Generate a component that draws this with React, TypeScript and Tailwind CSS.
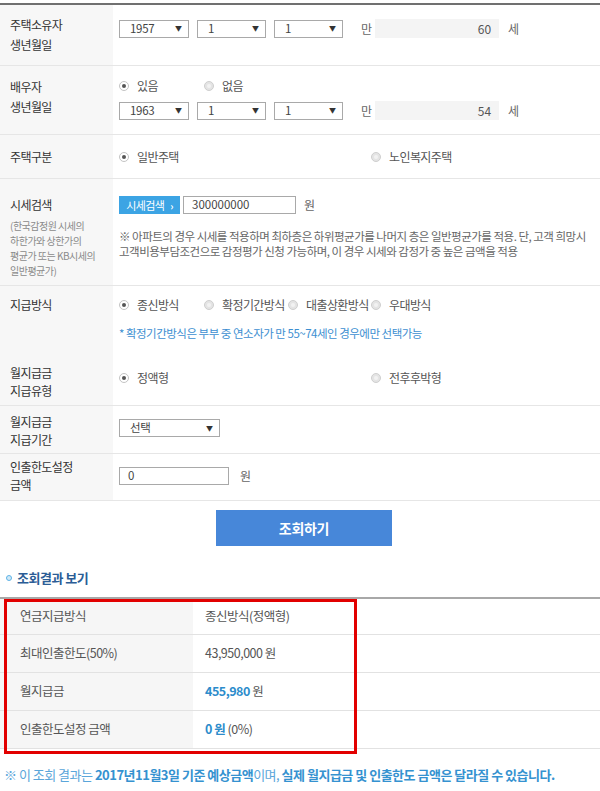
import React from "react";

const Radio = ({ label, checked, className = "" }: { label: string; checked?: boolean; className?: string }) => (
  <div className={`flex items-center gap-[8px] h-[14px] ${className}`}>
    {checked ? (
      <span className="flex items-center justify-center w-[10px] h-[10px] rounded-full border border-[#c4c4c4] bg-white">
        <span className="w-[4px] h-[4px] rounded-full bg-[#555]" />
      </span>
    ) : (
      <span className="flex items-center justify-center w-[10px] h-[10px] rounded-full border border-[#cfcfcf] bg-[#e4e4e4]">
        <span className="w-[4px] h-[4px] rounded-full bg-[#f2f2f2]" />
      </span>
    )}
    <span className="text-[12px] text-[#555] tracking-[-0.6px] leading-[14px] whitespace-nowrap">{label}</span>
  </div>
);

const Select = ({ value, className = "w-[70px]" }: { value: string; className?: string }) => (
  <div className={`flex items-center justify-between h-[18px] border border-[#a9a9a9] bg-white pl-[10px] pr-[6px] ${className}`}>
    <span className="text-[11.5px] text-[#444] leading-none tracking-[-0.3px]">{value}</span>
    <span className="text-[7px] text-[#333] leading-none">▼</span>
  </div>
);

const Row = ({
  label,
  labelClass = "",
  contentClass = "",
  rowClass = "",
  border = true,
  children,
}: {
  label: React.ReactNode;
  labelClass?: string;
  contentClass?: string;
  rowClass?: string;
  border?: boolean;
  children: React.ReactNode;
}) => (
  <div className={`flex ${border ? "border-b border-[#e6e6e6]" : ""} ${rowClass}`}>
    <div className={`w-[113px] shrink-0 bg-[#f7f7f7] pl-[10px] text-[12px] text-[#333] tracking-[-0.6px] ${labelClass}`}>{label}</div>
    <div className={`flex-1 pl-[6px] ${contentClass}`}>{children}</div>
  </div>
);

const App = () => {
  return (
    <div className="w-[600px] h-[791px] overflow-hidden bg-white pt-[3px] font-['Noto_Sans_CJK_KR',sans-serif] text-[#444]">
      <div className="border-t-2 border-[#707070]">
        <Row label={<>주택소유자<br />생년월일</>} rowClass="h-[61px]" labelClass="pt-[10px] leading-[20px]" contentClass="pt-[14px]">
          <div className="flex items-center">
            <Select value="1957" />
            <Select value="1" className="w-[69px] ml-[8px]" />
            <Select value="1" className="w-[69px] ml-[8px]" />
            <span className="ml-[18px] text-[12px] text-[#666]">만</span>
            <div className="ml-[3px] w-[124px] h-[19px] bg-[#f4f4f4] flex items-center justify-end pr-[8px] text-[12px] text-[#555]">60</div>
            <span className="ml-[9px] text-[12px] text-[#666]">세</span>
          </div>
        </Row>

        <Row label={<>배우자<br />생년월일</>} rowClass="h-[69px]" labelClass="pt-[11px] leading-[20px]" contentClass="pt-[13px]">
          <div className="flex">
            <Radio label="있음" checked className="w-[85px]" />
            <Radio label="없음" />
          </div>
          <div className="flex items-center mt-[8px]">
            <Select value="1963" />
            <Select value="1" className="w-[69px] ml-[8px]" />
            <Select value="1" className="w-[69px] ml-[8px]" />
            <span className="ml-[18px] text-[12px] text-[#666]">만</span>
            <div className="ml-[3px] w-[124px] h-[19px] bg-[#f4f4f4] flex items-center justify-end pr-[8px] text-[12px] text-[#555]">54</div>
            <span className="ml-[9px] text-[12px] text-[#666]">세</span>
          </div>
        </Row>

        <Row label="주택구분" rowClass="h-[44px]" labelClass="flex items-center" contentClass="flex items-center">
          <Radio label="일반주택" checked className="w-[252px]" />
          <Radio label="노인복지주택" />
        </Row>

        <Row
          label={
            <>
              <div className="pt-[16px] leading-[20px]">시세검색</div>
              <div className="mt-[3px] text-[10px] leading-[15px] text-[#8a8a8a] tracking-[-0.5px] whitespace-nowrap">
                (한국감정원 시세의
                <br />
                하한가와 상한가의
                <br />
                평균가 또는 KB시세의
                <br />
                일반평균가)
              </div>
            </>
          }
          rowClass="h-[107px]"
          contentClass="pt-[17px]"
        >
          <div className="flex items-center">
            <div className="flex items-center justify-center gap-[6px] w-[61px] h-[18px] bg-[#3ca4e4] text-white text-[11px] tracking-[-0.6px]">
              시세검색 <span className="font-bold text-[10px]">›</span>
            </div>
            <div className="ml-[3px] w-[113px] h-[18px] border border-[#a9a9a9] pl-[8px] flex items-center text-[11.5px] text-[#444]">300000000</div>
            <span className="ml-[8px] text-[12px] text-[#666]">원</span>
          </div>
          <p className="mt-[15px] text-[11.5px] leading-[15px] text-[#666] tracking-[-0.5px] whitespace-nowrap">
            ※ 아파트의 경우 시세를 적용하며 최하층은 하위평균가를 나머지 층은 일반평균가를 적용. 단, 고객 희망시
            <br />
            고객비용부담조건으로 감정평가 신청 가능하며, 이 경우 시세와 감정가 중 높은 금액을 적용
          </p>
        </Row>

        <Row label="지급방식" border={false} rowClass="h-[69px]" labelClass="pt-[9px] leading-[20px]" contentClass="pt-[12px]">
          <div className="flex">
            <Radio label="종신방식" checked className="w-[85px]" />
            <Radio label="확정기간방식" className="w-[84px] gap-[6px]" />
            <Radio label="대출상환방식" className="w-[83px] gap-[6px]" />
            <Radio label="우대방식" />
          </div>
          <p className="mt-[13px] text-[11.5px] leading-[16px] text-[#3d8fd1] tracking-[-0.5px] whitespace-nowrap">
            * 확정기간방식은 부부 중 연소자가 만 55~74세인 경우에만 선택가능
          </p>
        </Row>

        <Row label={<>월지급금<br />지급유형</>} rowClass="h-[51px]" labelClass="pt-[9px] leading-[18px]" contentClass="pt-[16px]">
          <div className="flex">
            <Radio label="정액형" checked className="w-[252px]" />
            <Radio label="전후후박형" />
          </div>
        </Row>

        <Row label={<>월지급금<br />지급기간</>} rowClass="h-[48px]" labelClass="pt-[7px] leading-[18px]" contentClass="pt-[13px]">
          <Select value="선택" className="w-[101px]" />
        </Row>

        <Row label={<>인출한도설정<br />금액</>} rowClass="h-[47px]" labelClass="pt-[4px] leading-[18px]" contentClass="pt-[13px]">
          <div className="flex items-center">
            <div className="w-[110px] h-[18px] border border-[#a9a9a9] pl-[8px] flex items-center text-[11.5px] text-[#444]">0</div>
            <span className="ml-[11px] text-[12px] text-[#666]">원</span>
          </div>
        </Row>
      </div>

      <div className="mt-[9px] ml-[216px] w-[176px] h-[36px] bg-[#4787d9] flex items-center justify-center text-white text-[14px] font-bold tracking-[-0.3px]">
        조회하기
      </div>

      <div className="mt-[24px] flex items-center h-[16px] pl-[6px]">
        <span className="w-[6px] h-[6px] rounded-full border-[1.5px] border-[#5fb3e6] bg-[#cfe9f8]" />
        <span className="ml-[5px] text-[13px] font-bold text-[#2b5d96] tracking-[-0.5px]">조회결과 보기</span>
      </div>

      <div className="relative mt-[11px] border-t-2 border-[#a8a8a8]">
        {[
          { k: "연금지급방식", v: <>종신방식(정액형)</>, h: "h-[36px]" },
          { k: "최대인출한도(50%)", v: <>43,950,000 원</>, h: "h-[38px]" },
          { k: "월지급금", v: <><span className="font-bold text-[#2c8ccb]">455,980</span>&nbsp;원</>, h: "h-[38px]" },
          { k: "인출한도설정 금액", v: <><span className="font-bold text-[#2c8ccb]">0 원</span>&nbsp;(0%)</>, h: "h-[38px]" },
        ].map((r) => (
          <div key={r.k} className={`flex border-b border-[#e2e2e2] ${r.h}`}>
            <div className="w-[193px] shrink-0 bg-[#f6f6f6] pl-[20px] flex items-center text-[12.5px] text-[#555] tracking-[-0.5px]">{r.k}</div>
            <div className="flex-1 pl-[12px] flex items-center text-[12.5px] text-[#555] tracking-[-0.5px] whitespace-pre">{r.v}</div>
          </div>
        ))}
        <div className="absolute left-[4px] top-0 w-[353px] h-[155px] border-[3px] border-[#e20000]" />
      </div>

      <p className="mt-[18px] pl-[4px] text-[13px] leading-[16px] text-[#3592d0] tracking-[-0.5px] whitespace-nowrap">
        <span className="text-[#5aa6da]">※ 이 조회 결과는 </span>
        <span className="font-bold">2017년11월3일 기준 예상금액</span>
        <span className="text-[#5aa6da]">이며, </span>
        <span className="font-bold">실제 월지급금 및 인출한도 금액은 달라질 수 있습니다.</span>
      </p>
    </div>
  );
};

export default App;
